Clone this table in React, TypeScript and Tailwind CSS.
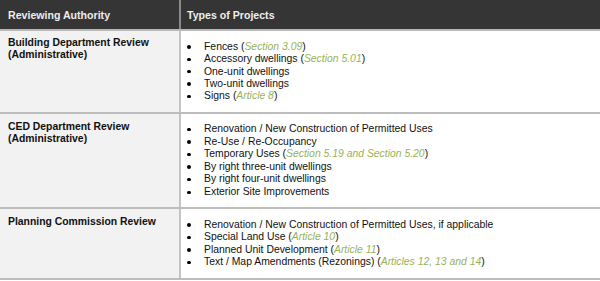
import React from "react";

type Item = { text: string; ref?: string; after?: string };

type Row = {
  title: string[];
  items: Item[];
  height: string;
  titleTop: string;
  listTop: string;
  leading: string;
};

const rows: Row[] = [
  {
    title: ["Building Department Review", "(Administrative)"],
    items: [
      { text: "Fences (", ref: "Section 3.09", after: ")" },
      { text: "Accessory dwellings (", ref: "Section 5.01", after: ")" },
      { text: "One-unit dwellings" },
      { text: "Two-unit dwellings" },
      { text: "Signs (", ref: "Article 8", after: ")" },
    ],
    height: "h-[83px]",
    titleTop: "pt-[6px]",
    listTop: "pt-[10px]",
    leading: "leading-[12.3px]",
  },
  {
    title: ["CED Department Review", "(Administrative)"],
    items: [
      { text: "Renovation / New Construction of Permitted Uses" },
      { text: "Re-Use / Re-Occupancy" },
      { text: "Temporary Uses (", ref: "Section 5.19 and Section 5.20", after: ")" },
      { text: "By right three-unit dwellings" },
      { text: "By right four-unit dwellings" },
      { text: "Exterior Site Improvements" },
    ],
    height: "h-[95px]",
    titleTop: "pt-[7px]",
    listTop: "pt-[9px]",
    leading: "leading-[12.6px]",
  },
  {
    title: ["Planning Commission Review"],
    items: [
      { text: "Renovation / New Construction of Permitted Uses, if applicable" },
      { text: "Special Land Use (", ref: "Article 10", after: ")" },
      { text: "Planned Unit Development (", ref: "Article 11", after: ")" },
      { text: "Text / Map Amendments (Rezonings) (", ref: "Articles 12, 13 and 14", after: ")" },
    ],
    height: "h-[71px]",
    titleTop: "pt-[7px]",
    listTop: "pt-[10px]",
    leading: "leading-[12.4px]",
  },
];

export default function App() {
  return (
    <div
      className="w-[600px] h-[281px] bg-white text-[10.4px] text-[#111]"
      style={{ fontFamily: '"Liberation Sans", Arial, sans-serif' }}
    >
      {/* Header */}
      <div className="flex h-[31px] bg-[#353535] border-b-2 border-[#b8b8b8] text-[#eeeeee] font-bold text-[10.6px]">
        <div className="w-[181px] pl-[8px] pt-[8px] border-r-2 border-[#8a8a8a]">Reviewing Authority</div>
        <div className="flex-1 pl-[6px] pt-[8px]">Types of Projects</div>
      </div>

      {rows.map((row, i) => (
        <div key={i} className={`flex ${row.height} border-b-2 border-[#bdbdbd]`}>
          <div className={`w-[181px] bg-[#f2f2f2] border-r-2 border-[#c4c4c4] pl-[8px] ${row.titleTop} font-bold leading-[12px]`}>
            {row.title.map((t) => (
              <div key={t}>{t}</div>
            ))}
          </div>
          <ul className={`flex-1 ${row.listTop} ${row.leading}`}>
            {row.items.map((it, j) => (
              <li key={j} className="flex items-center">
                <span className="w-[23px] pl-[6px] flex items-center">
                  <span className="block w-[3.5px] h-[3.5px] rounded-full bg-black" />
                </span>
                <span>
                  {it.text}
                  {it.ref && <i className="text-[#97b256]">{it.ref}</i>}
                  {it.after}
                </span>
              </li>
            ))}
          </ul>
        </div>
      ))}
    </div>
  );
}
